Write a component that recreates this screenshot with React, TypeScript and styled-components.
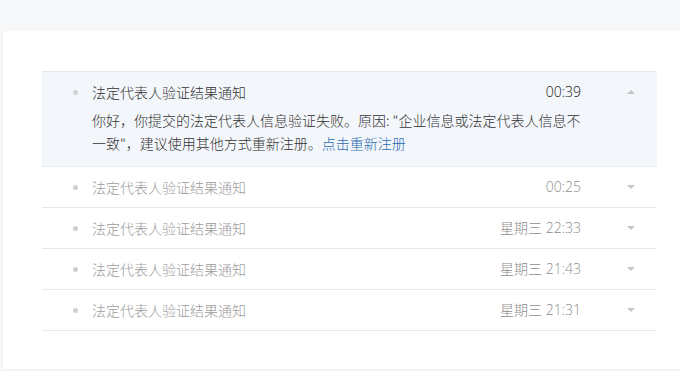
import React, { useState } from "react";
import styled, { createGlobalStyle } from "styled-components";

const Global = createGlobalStyle`
  html, body { margin: 0; padding: 0; background: #f7f8fa; }
  body { font-family: "Noto Sans CJK SC", "Open Sans", sans-serif; font-weight: 300; -webkit-font-smoothing: antialiased; }
`;

const Page = styled.div`
  padding: 31px 0 0 2px;
  height: 372px;
  box-sizing: border-box;
  overflow: hidden;
`;

const Panel = styled.div`
  width: 678px;
  height: 339px;
  box-sizing: border-box;
  background: #fff;
  border-left: 1px solid #f0f1f3;
  border-bottom: 1px solid #eceef1;
  padding: 40px 23px 0 39px;
`;

const List = styled.div`
  border-top: 1px solid #e6e8eb;
`;

const Item = styled.div<{ $open: boolean }>`
  background: ${(p) => (p.$open ? "#f3f6fa" : "#fff")};
  border-bottom: 1px solid #e6e8eb;
`;

const Header = styled.div`
  display: flex;
  align-items: center;
  height: 40px;
  padding: 0 22px 0 31px;
  cursor: pointer;
`;

const Dot = styled.span`
  width: 5px;
  height: 5px;
  border-radius: 50%;
  background: #d0d0d0;
  flex: none;
  margin-right: 14px;
`;

const Title = styled.span<{ $open: boolean }>`
  flex: 1;
  font-size: 14px;
  color: ${(p) => (p.$open ? "#333" : "#9c9c9c")};
  line-height: 20px;
`;

const Time = styled.span<{ $open: boolean }>`
  font-family: "Open Sans", "Noto Sans CJK SC", sans-serif;
  font-weight: 300;
  font-size: 14px;
  color: ${(p) => (p.$open ? "#222" : "#8e8e8e")};
  line-height: 20px;
  margin-right: 46px;
`;

const Caret = styled.span<{ $open: boolean }>`
  width: 0;
  height: 0;
  border-left: 4px solid transparent;
  border-right: 4px solid transparent;
  ${(p) =>
    p.$open
      ? "border-bottom: 4px solid #c4c6ca;"
      : "border-top: 4px solid #c4c6ca;"}
`;

const Body = styled.div`
  padding: 0 0 11px 50px;
  width: 490px;
  font-size: 14px;
  line-height: 23px;
  color: #333;
  margin-top: -3px;
`;

const Link = styled.a`
  color: #2a6ab1;
  text-decoration: none;
  cursor: pointer;
`;

const items = [
  { time: "00:39" },
  { time: "00:25" },
  { time: "星期三 22:33" },
  { time: "星期三 21:43" },
  { time: "星期三 21:31" },
];

export default function App() {
  const [open, setOpen] = useState(0);
  return (
    <>
      <Global />
      <Page>
        <Panel>
          <List>
            {items.map((it, i) => {
              const o = open === i;
              return (
                <Item key={i} $open={o}>
                  <Header onClick={() => setOpen(o ? -1 : i)}>
                    <Dot />
                    <Title $open={o}>法定代表人验证结果通知</Title>
                    <Time $open={o}>{it.time}</Time>
                    <Caret $open={o} />
                  </Header>
                  {o && (
                    <Body>
                      你好，你提交的法定代表人信息验证失败。原因: "企业信息或法定代表人信息不一致"，建议使用其他方式重新注册。
                      <Link>点击重新注册</Link>
                    </Body>
                  )}
                </Item>
              );
            })}
          </List>
        </Panel>
      </Page>
    </>
  );
}
